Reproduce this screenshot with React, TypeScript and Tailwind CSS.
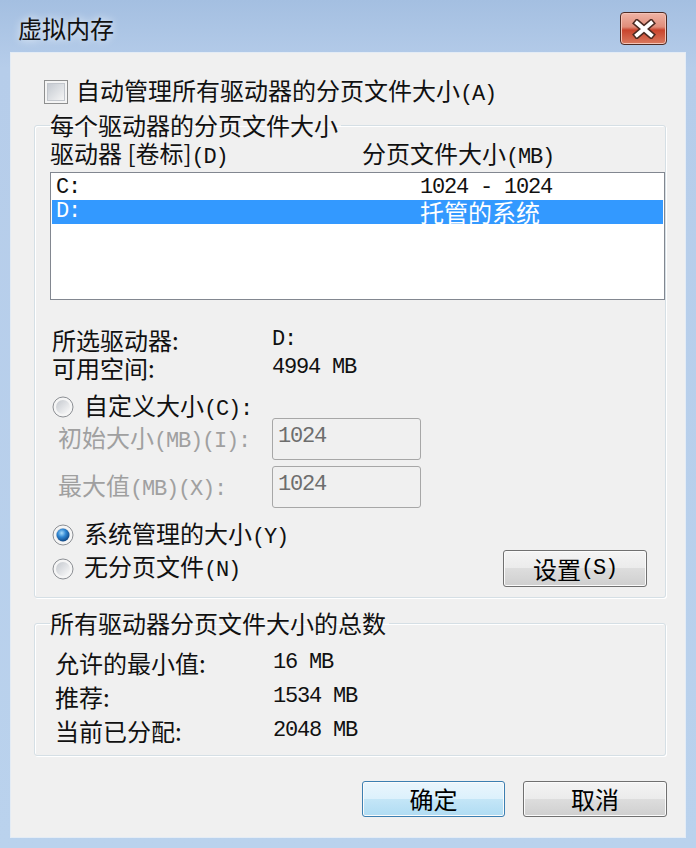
import React from "react";

const cjk = "font-['Noto_Sans_CJK_SC',sans-serif]";

function Latin({ children, className = "" }: { children: React.ReactNode; className?: string }) {
  return (
    <span className={`font-['Liberation_Mono',monospace] text-[22px] tracking-[-1.2px] ${className}`}>{children}</span>
  );
}

function Checkbox() {
  return (
    <svg width="24" height="24" viewBox="0 0 24 24" className="shrink-0">
      <defs>
        <linearGradient id="cbfill" x1="0" y1="0" x2="1" y2="1">
          <stop offset="0" stopColor="#c4c9d0" />
          <stop offset="1" stopColor="#f6f6f6" />
        </linearGradient>
      </defs>
      <rect x="0.5" y="0.5" width="23" height="23" fill="#f4f4f4" stroke="#8e8f8f" />
      <rect x="3.5" y="3.5" width="17" height="17" fill="url(#cbfill)" stroke="#c2c6cc" />
    </svg>
  );
}

function Radio({ checked = false }: { checked?: boolean }) {
  return (
    <svg width="22" height="22" viewBox="0 0 22 22" className="shrink-0">
      <defs>
        <linearGradient id="rfill" x1="0" y1="0" x2="1" y2="1">
          <stop offset="0" stopColor="#c4c8ce" />
          <stop offset="1" stopColor="#fbfbfb" />
        </linearGradient>
        <radialGradient id="rdot" cx="0.4" cy="0.35" r="0.7">
          <stop offset="0" stopColor="#a8dcfa" />
          <stop offset="0.45" stopColor="#2f86d2" />
          <stop offset="1" stopColor="#0b3f7c" />
        </radialGradient>
      </defs>
      <circle cx="11" cy="11" r="10" fill="#f5f5f5" stroke="#8c8f94" />
      <circle cx="11" cy="11" r="7" fill="url(#rfill)" />
      {checked && <circle cx="11" cy="11" r="6.5" fill="url(#rdot)" />}
    </svg>
  );
}

function WinButton({ children, primary = false, className = "" }: { children: React.ReactNode; primary?: boolean; className?: string }) {
  return (
    <button
      className={`flex items-center justify-center rounded-[3px] border text-[24px] leading-none text-black shadow-[inset_0_0_0_1px_#fbfbfb] ${
        primary
          ? "border-[#3c7fb1] bg-[linear-gradient(#eaf6fd_0%,#dcf1fc_50%,#c4e6f7_50%,#b0dcf3_100%)]"
          : "border-[#707070] bg-[linear-gradient(#f4f4f4_0%,#ebebeb_50%,#dddddd_50%,#cfcfcf_100%)]"
      } ${className}`}
    >
      {children}
    </button>
  );
}

function CloseButton() {
  return (
    <div className="flex h-[33px] w-[47px] items-center justify-center rounded-[4px] border border-[#4d2b24] bg-[linear-gradient(#efb4a6_0%,#e08d7a_45%,#c9442d_55%,#d97a60_100%)] shadow-[inset_0_0_0_1px_#f3c3b7]">
      <svg width="26" height="20" viewBox="0 0 26 20">
        <path d="M6 4 L20 16 M20 4 L6 16" stroke="#4a2a22" strokeWidth="7" strokeLinecap="square" />
        <path d="M6 4 L20 16 M20 4 L6 16" stroke="#ffffff" strokeWidth="4" strokeLinecap="square" />
      </svg>
    </div>
  );
}

export default function App() {
  return (
    <div className={`${cjk} h-[848px] w-[696px] bg-[linear-gradient(180deg,#a4bfe1_0%,#b6cdea_8%,#bad2ed_100%)] text-[24px] leading-[28px] text-[#111]`}>
      {/* title bar */}
      <div className="flex h-[52px] items-start justify-between pl-[18px] pr-[29px] pt-[12px]">
        <span className="mt-[2px] leading-[28px] [text-shadow:0_0_8px_#ffffff]">虚拟内存</span>
        <CloseButton />
      </div>

      {/* client area */}
      <div className="mx-[10px] h-[786px] border border-[#e4ecf5] bg-[#f0f0f0]">
        <div className="mt-[27px] flex h-[24px] items-center gap-[8px] pl-[33px]">
          <Checkbox />
          <span className="leading-[24px]">
            自动管理所有驱动器的分页文件大小<Latin>(A)</Latin>
          </span>
        </div>

        <fieldset className="ml-[23px] mt-[7px] w-[632px] rounded-[3px] border border-[#d5dfe5] pb-[10px] pl-[15px] shadow-[inset_1px_1px_0_#ffffff,1px_1px_0_#ffffff]">
          <legend className="pr-[3px] leading-[28px]">每个驱动器的分页文件大小</legend>

          <div className="mt-[2px] flex h-[28px] items-center leading-[26px]">
            <span className="w-[312px]">
              驱动器 [卷标]<Latin>(D)</Latin>
            </span>
            <span>
              分页文件大小<Latin>(MB)</Latin>
            </span>
          </div>

          <div className="mt-[3px] h-[128px] border border-[#828790] bg-white px-[1px] pt-[3px] leading-[24px]">
            <div className="flex h-[24px] items-center">
              <Latin className="w-[368px] pl-[4px]">C:</Latin>
              <Latin>1024 - 1024</Latin>
            </div>
            <div className="flex h-[24px] items-center bg-[#3399ff] text-white">
              <Latin className="w-[368px] pl-[4px]">D:</Latin>
              <span>托管的系统</span>
            </div>
          </div>

          <div className="mt-[26px] flex h-[28px] items-center pl-[2px] leading-[26px]">
            <span className="w-[220px]">所选驱动器:</span>
            <Latin>D:</Latin>
          </div>
          <div className="flex h-[28px] items-center pl-[2px] leading-[26px]">
            <span className="w-[220px]">可用空间:</span>
            <Latin>4994 MB</Latin>
          </div>

          <div className="mt-[14px] flex h-[22px] items-center gap-[10px] pl-[2px] leading-[22px]">
            <Radio />
            <span>
              自定义大小<Latin>(C):</Latin>
            </span>
          </div>

          <div className="flex h-[42px] items-center leading-[26px]">
            <span className="w-[222px] pl-[8px] text-[#a0a0a0]">
              初始大小<Latin className="text-[19px]">(MB)(I):</Latin>
            </span>
            <div className="flex h-[42px] w-[149px] items-center rounded-[3px] border border-[#a7a7a7] pb-[4px] pl-[5px]">
              <Latin className="text-[#6d6d6d]">1024</Latin>
            </div>
          </div>
          <div className="mt-[6px] flex h-[42px] items-center leading-[26px]">
            <span className="w-[222px] pl-[8px] text-[#a0a0a0]">
              最大值<Latin className="text-[19px]">(MB)(X):</Latin>
            </span>
            <div className="flex h-[42px] w-[149px] items-center rounded-[3px] border border-[#a7a7a7] pb-[4px] pl-[5px]">
              <Latin className="text-[#6d6d6d]">1024</Latin>
            </div>
          </div>

          <div className="mt-[16px] flex h-[22px] items-center gap-[10px] pl-[2px] leading-[22px]">
            <Radio checked />
            <span>
              系统管理的大小<Latin>(Y)</Latin>
            </span>
          </div>

          <div className="mt-[4px] flex h-[37px] items-center justify-between pl-[2px] pr-[18px] leading-[24px]">
            <div className="flex items-center gap-[10px]">
              <Radio />
              <span>
                无分页文件<Latin>(N)</Latin>
              </span>
            </div>
            <WinButton className="h-[37px] w-[144px]">
              设置<Latin>(S)</Latin>
            </WinButton>
          </div>
        </fieldset>

        <fieldset className="ml-[23px] mt-[11px] w-[632px] rounded-[3px] border border-[#d5dfe5] pb-[7px] pl-[15px] shadow-[inset_1px_1px_0_#ffffff,1px_1px_0_#ffffff]">
          <legend className="pr-[3px] leading-[28px]">所有驱动器分页文件大小的总数</legend>
          <div className="pl-[5px] pt-[9px] leading-[28px]">
            <div className="flex h-[34px] items-center">
              <span className="w-[218px]">允许的最小值:</span>
              <Latin>16 MB</Latin>
            </div>
            <div className="flex h-[34px] items-center">
              <span className="w-[218px]">推荐:</span>
              <Latin>1534 MB</Latin>
            </div>
            <div className="flex h-[34px] items-center">
              <span className="w-[218px]">当前已分配:</span>
              <Latin>2048 MB</Latin>
            </div>
          </div>
        </fieldset>

        <div className="mt-[25px] flex justify-end gap-[18px] pr-[18px]">
          <WinButton primary className="h-[36px] w-[143px]">
            确定
          </WinButton>
          <WinButton className="h-[36px] w-[144px]">取消</WinButton>
        </div>
      </div>
    </div>
  );
}
